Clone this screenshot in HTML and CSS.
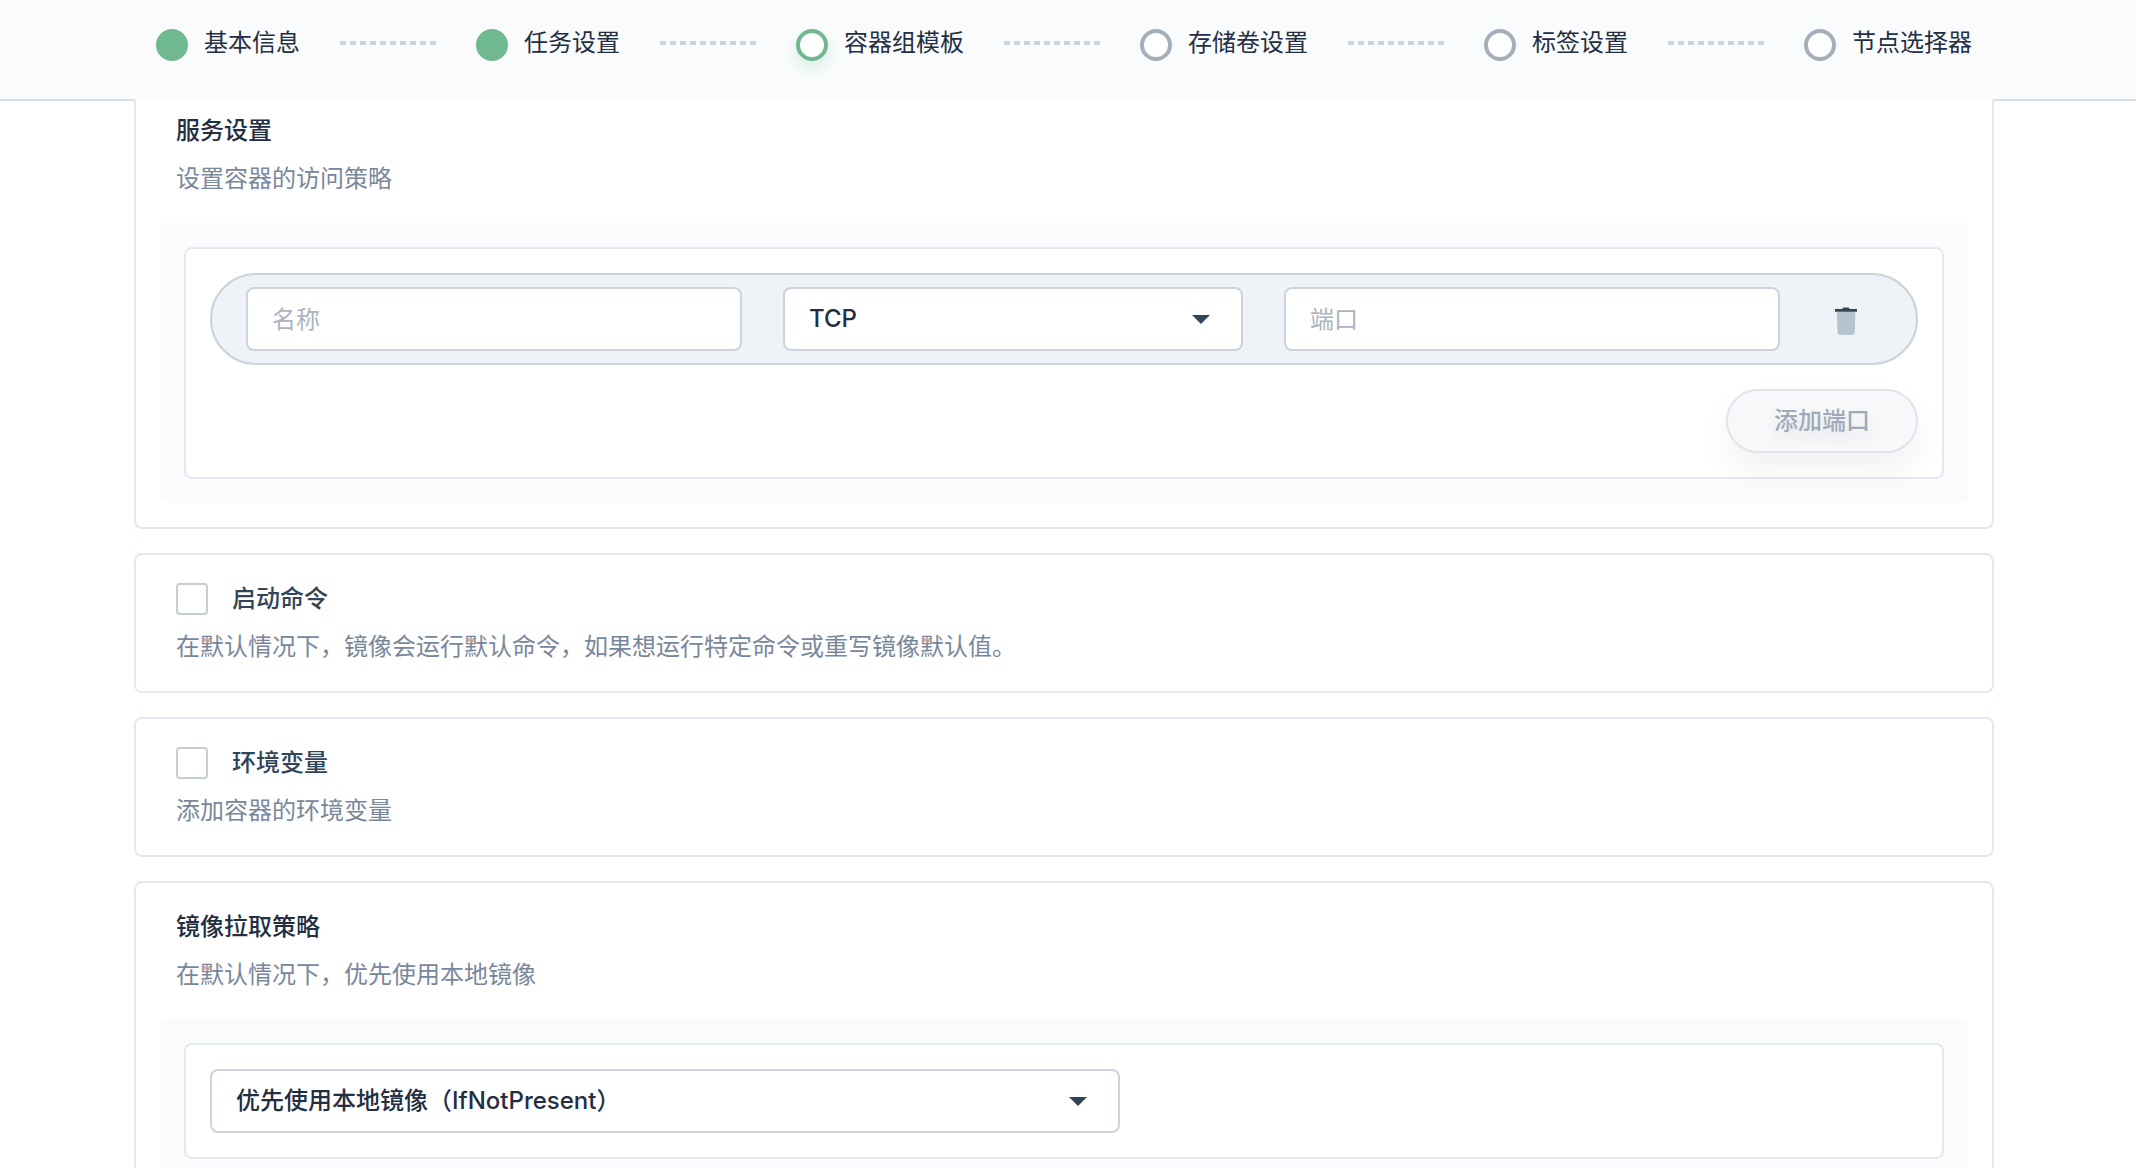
FILE: index.html
```html
<!DOCTYPE html>
<html lang="zh-CN">
<head>
<meta charset="utf-8">
<meta name="viewport" content="width=device-width, initial-scale=1">
<title>容器组模板</title>
<link rel="stylesheet" href="styles.css">
</head>
<body>
<header class="header">
  <ol class="steps">
    <li class="step"><span class="dot dot-done"></span>基本信息</li>
    <li class="dash" aria-hidden="true"></li>
    <li class="step"><span class="dot dot-done"></span>任务设置</li>
    <li class="dash" aria-hidden="true"></li>
    <li class="step" aria-current="step"><span class="dot dot-current"></span>容器组模板</li>
    <li class="dash" aria-hidden="true"></li>
    <li class="step"><span class="dot"></span>存储卷设置</li>
    <li class="dash" aria-hidden="true"></li>
    <li class="step"><span class="dot"></span>标签设置</li>
    <li class="dash" aria-hidden="true"></li>
    <li class="step"><span class="dot"></span>节点选择器</li>
  </ol>
</header>
<main class="content">
  <section class="card card-open">
    <h2 class="title">服务设置</h2>
    <p class="desc">设置容器的访问策略</p>
    <div class="panel">
      <div class="box">
        <div class="port-row">
          <input class="field" type="text" placeholder="名称" aria-label="名称">
          <select class="field select" aria-label="协议">
            <option>TCP</option>
          </select>
          <input class="field" type="text" placeholder="端口" aria-label="端口">
          <button class="delete" type="button" aria-label="删除">
            <svg width="32" height="32" viewBox="0 0 32 32" aria-hidden="true">
              <path d="M6.800 9h18.600l-.7 20.600a2.500 2.500 0 0 1-2.500 2.400h-12.200a2.500 2.500 0 0 1-2.500-2.400z" fill="#b6c2cd"/>
              <path d="M5 6h7l1.500-1.600h5l1.500 1.600h7v2.800H5z" fill="#324558"/>
            </svg>
          </button>
        </div>
        <button class="add" type="button">添加端口</button>
      </div>
    </div>
  </section>

  <section class="card">
    <label class="check"><input class="checkbox" type="checkbox">启动命令</label>
    <p class="desc">在默认情况下，镜像会运行默认命令，如果想运行特定命令或重写镜像默认值。</p>
  </section>

  <section class="card">
    <label class="check"><input class="checkbox" type="checkbox">环境变量</label>
    <p class="desc">添加容器的环境变量</p>
  </section>

  <section class="card">
    <h2 class="title">镜像拉取策略</h2>
    <p class="desc">在默认情况下，优先使用本地镜像</p>
    <div class="panel">
      <div class="box">
        <select class="field select policy" aria-label="镜像拉取策略">
          <option>优先使用本地镜像（IfNotPresent）</option>
        </select>
      </div>
    </div>
  </section>
</main>
</body>
</html>
```

FILE: styles.css
```css
* {
  box-sizing: border-box;
}

body {
  display: flex;
  flex-direction: column;
  height: 100vh;
  margin: 0;
  background: #fff;
  color: #242e42;
  font-family: Inter, "Noto Sans CJK SC", sans-serif;
  font-size: 24px;
  line-height: 48px;
}

button,
input,
select {
  margin: 0;
  font: inherit;
  color: inherit;
}

/* Wizard steps */
.header {
  flex: none;
  padding: 25px 8px 38px 0;
  border-bottom: 2px solid #d8e0e7;
  background: #fafbfd;
}

.steps {
  display: flex;
  justify-content: center;
  align-items: center;
  gap: 40px;
  margin: 0;
  padding: 0;
  list-style: none;
}

.step {
  display: flex;
  align-items: center;
  gap: 16px;
  line-height: 36px;
  white-space: nowrap;
}

.dot {
  width: 32px;
  height: 32px;
  margin-top: 4px;
  border: 4px solid #a5afbb;
  border-radius: 50%;
  background: #fff;
}

.dot-done {
  border-color: #70b88f;
  background: #70b88f;
}

.dot-current {
  border-color: #70b88f;
  box-shadow: 0 8px 16px rgba(85, 188, 138, 0.2);
}

.dash {
  width: 96px;
  height: 4px;
  background: repeating-linear-gradient(90deg, #ccd3db 0 6px, transparent 6px 10px);
}

/* Form cards; the scroll area covers the header rule */
.content {
  position: relative;
  flex: 1;
  display: flex;
  flex-direction: column;
  gap: 24px;
  min-height: 0;
  margin-top: -2px;
  padding: 0 142px 24px 134px;
  overflow-y: auto;
  scrollbar-width: none;
}

.card {
  flex: none;
  padding: 20px 24px;
  border: 2px solid #e3e9ef;
  border-radius: 8px;
  background: #fff;
}

.card:has(.panel) {
  padding-bottom: 24px;
}

.card-open {
  padding-top: 8px;
  border-top: 0;
  border-radius: 0 0 8px 8px;
}

.title,
.desc {
  margin: 0;
  padding: 0 16px;
  font-size: 24px;
}

.title {
  font-weight: 500;
}

.desc {
  color: #79879c;
}

.check {
  display: flex;
  align-items: center;
  gap: 24px;
  padding: 0 16px;
  color: #324558;
  font-weight: 500;
}

.checkbox {
  appearance: none;
  width: 32px;
  height: 32px;
  border: 2px solid #c5ced7;
  border-radius: 4px;
  background: #fff;
}

.panel {
  margin-top: 20px;
  padding: 24px;
  border-radius: 8px;
  background: #fafbfd;
}

.box {
  display: flex;
  flex-direction: column;
  gap: 24px;
  padding: 24px;
  border: 2px solid #e3e9ef;
  border-radius: 8px;
  background: #fff;
}

.port-row {
  display: grid;
  grid-template-columns: minmax(0, 496fr) minmax(0, 460fr) minmax(0, 496fr) 50px;
  align-items: center;
  gap: 41px;
  padding: 12px 45px 12px 34px;
  border: 2px solid #ccd3db;
  border-radius: 46px;
  background: #eff3f8;
}

.field {
  width: 100%;
  height: 64px;
  padding: 0 24px;
  border: 2px solid #ccd3db;
  border-radius: 8px;
  background: #fff;
  line-height: 36px;
}

.field::placeholder {
  color: #abb4be;
  opacity: 1;
}

.select {
  appearance: none;
  padding-right: 64px;
  background: #fff url("data:image/svg+xml,%3Csvg xmlns='http://www.w3.org/2000/svg' width='18' height='9'%3E%3Cpath d='M0 0h18l-9 9z' fill='%23324558'/%3E%3C/svg%3E") no-repeat right 31px center;
  font-weight: 500;
}

.policy {
  max-width: 910px;
}

.delete {
  display: flex;
  justify-content: center;
  align-items: center;
  height: 50px;
  padding: 0;
  border: 0;
  background: none;
}

.add {
  align-self: flex-end;
  width: 192px;
  height: 64px;
  padding: 0;
  border: 2px solid #e0e3e9;
  border-radius: 32px;
  background: #f7f8fa;
  box-shadow: 0 16px 32px rgba(0, 0, 0, 0.06);
  color: #a1a9b9;
  font-weight: 500;
  line-height: 36px;
  text-shadow: 0 8px 16px rgba(35, 45, 65, 0.1);
}
```
